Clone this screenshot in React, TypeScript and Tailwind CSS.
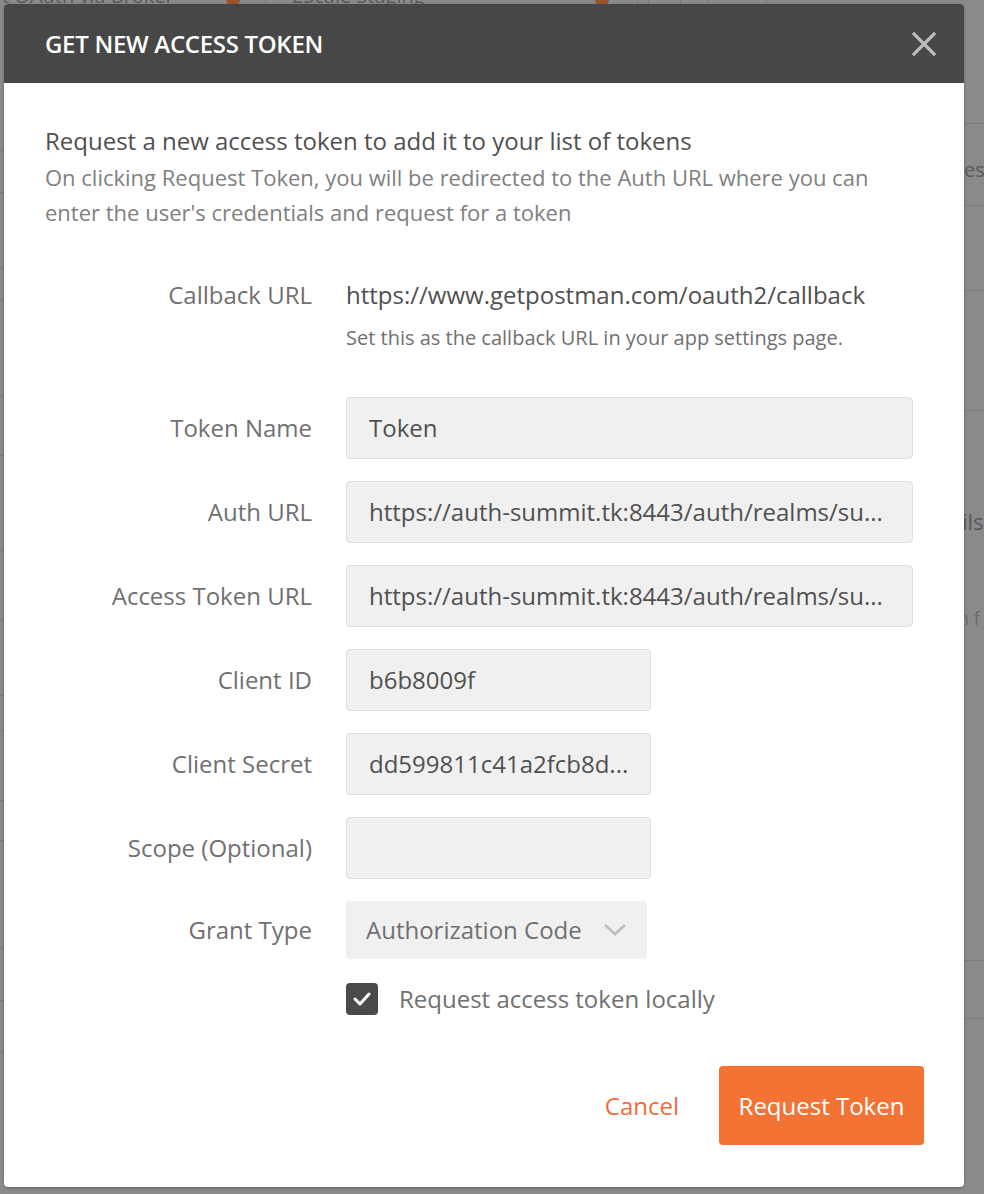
import React from "react";

const font = { fontFamily: '"Open Sans", "Noto Sans", sans-serif' };

function Row({ label, children }: { label: string; children: React.ReactNode }) {
  return (
    <div className="flex items-center">
      <div className="w-[267px] shrink-0 text-right text-[24px] leading-[32px] text-[#707070]">{label}</div>
      <div className="ml-[34px]">{children}</div>
    </div>
  );
}

function Field({ value, w }: { value: string; w: string }) {
  return (
    <div className={`${w} h-[62px] flex items-center rounded-[4px] border border-[#e0e0e0] bg-[#f0f0f0] pl-[22px] pr-[16px] text-[24px] leading-[32px] text-[#505050] overflow-hidden whitespace-nowrap`}>
      <span>{value}</span>
    </div>
  );
}

export default function App() {
  return (
    <div className="relative w-[984px] h-[1194px] overflow-hidden bg-[#8a8a8a]" style={font}>
      {/* faint app content behind overlay */}
      <div className="absolute inset-x-0 top-0 h-[6px] flex items-start text-[20px] leading-none text-[#5a5a5a]">
        <span className="ml-[2px] -mt-[14px]">t OAuth via Broker</span>
        <span className="ml-[52px] -mt-[6px] w-[14px] h-[12px] rounded-full bg-[#a0522d]" />
        <span className="ml-[25px] w-px h-[6px] bg-[#7a7a7a]" />
        <span className="ml-[26px] -mt-[14px]">2Scale Staging</span>
        <span className="ml-[170px] -mt-[6px] w-[14px] h-[12px] rounded-full bg-[#a0522d]" />
        <span className="ml-[28px] w-px h-[6px] bg-[#7a7a7a]" />
        <span className="ml-[10px] w-px h-[6px] bg-[#7a7a7a]" />
        <span className="ml-[31px] w-px h-[6px] bg-[#7a7a7a]" />
        <span className="ml-[27px] w-px h-[6px] bg-[#7a7a7a]" />
        <span className="ml-[57px] w-px h-[6px] bg-[#7a7a7a]" />
      </div>
      <div className="absolute right-0 top-0 w-[20px] h-full">
        <div className="absolute top-[123px] w-full h-px bg-[#7c7c7c]" />
        <div className="absolute top-[155px] left-0 text-[20px] text-[#5a5a5a]">es</div>
        <div className="absolute top-[205px] w-full h-px bg-[#7c7c7c]" />
        <div className="absolute top-[290px] w-full h-px bg-[#7c7c7c]" />
        <div className="absolute top-[410px] w-full h-px bg-[#7c7c7c]" />
        <div className="absolute top-[505px] -left-[2px] text-[22px] text-[#5a5a5a]">ils</div>
        <div className="absolute top-[605px] -left-[6px] text-[18px] text-[#6a6a6a]">n f</div>
        <div className="absolute top-[960px] w-full h-px bg-[#7c7c7c]" />
        <div className="absolute top-[1018px] w-full h-px bg-[#7c7c7c]" />
      </div>
      <div className="absolute left-0 top-0 w-[4px] h-full">
        {[150, 192, 267, 300, 395, 455, 550, 620, 695, 730, 800, 840, 948, 1000, 1052].map((t) => (
          <div key={t} className="absolute w-full h-px bg-[#7c7c7c]" style={{ top: t }} />
        ))}
      </div>

      {/* modal */}
      <div className="absolute left-[4px] top-[4px] w-[960px] h-[1183px] rounded-[4px] bg-white overflow-hidden shadow-[0_1px_3px_rgba(0,0,0,0.3)]">
        <div className="h-[79px] bg-[#474747] flex items-center justify-between pl-[41px] pr-[28px]">
          <div className="text-[24px] font-semibold text-white tracking-[-0.3px]">GET NEW ACCESS TOKEN</div>
          <svg width="24" height="24" viewBox="0 0 24 24">
            <path d="M2 2 L22 22 M22 2 L2 22" stroke="#bdbdbd" strokeWidth="3.2" strokeLinecap="square" />
          </svg>
        </div>

        <div className="pl-[41px] pt-[42px]">
          <div className="text-[24px] leading-[32px] text-[#505050]">Request a new access token to add it to your list of tokens</div>
          <div className="mt-[3px] text-[22px] leading-[35px] text-[#808080] w-[850px]">
            On clicking Request Token, you will be redirected to the Auth URL where you can enter the user's credentials and request for a token
          </div>

          <div className="mt-[49px] flex items-start">
            <div className="w-[267px] shrink-0 text-right text-[24px] leading-[32px] text-[#707070]">Callback URL</div>
            <div className="ml-[34px]">
              <div className="text-[24px] leading-[32px] text-[#505050]">https://www.getpostman.com/oauth2/callback</div>
              <div className="mt-[13px] text-[20px] leading-[28px] text-[#707070]">Set this as the callback URL in your app settings page.</div>
            </div>
          </div>

          <div className="mt-[45px] flex flex-col gap-[22px]">
            <Row label="Token Name"><Field value="Token" w="w-[567px]" /></Row>
            <Row label="Auth URL"><Field value="https://auth-summit.tk:8443/auth/realms/su..." w="w-[567px]" /></Row>
            <Row label="Access Token URL"><Field value="https://auth-summit.tk:8443/auth/realms/su..." w="w-[567px]" /></Row>
            <Row label="Client ID"><Field value="b6b8009f" w="w-[305px]" /></Row>
            <Row label="Client Secret"><Field value="dd599811c41a2fcb8d..." w="w-[305px]" /></Row>
            <Row label="Scope (Optional)"><Field value="" w="w-[305px]" /></Row>
            <Row label="Grant Type">
              <div className="w-[301px] h-[58px] flex items-center justify-between rounded-[4px] bg-[#f0f0f0] pl-[20px] pr-[20px] text-[24px] leading-[32px] text-[#707070] whitespace-nowrap">
                <span>Authorization Code</span>
                <svg width="24" height="14" viewBox="0 0 24 14" className="shrink-0">
                  <path d="M2 2 L12 11 L22 2" fill="none" stroke="#bdbdbd" strokeWidth="2.5" />
                </svg>
              </div>
            </Row>
          </div>

          <div className="mt-[24px] ml-[301px] flex items-center h-[32px]">
            <div className="w-[32px] h-[32px] rounded-[4px] bg-[#4a4a4a] flex items-center justify-center">
              <svg width="20" height="16" viewBox="0 0 20 16">
                <path d="M3 8 L8 13 L17 3" fill="none" stroke="#ffffff" strokeWidth="3" strokeLinecap="round" strokeLinejoin="round" />
              </svg>
            </div>
            <span className="ml-[21px] text-[24px] leading-[32px] text-[#707070]">Request access token locally</span>
          </div>

          <div className="mt-[51px] flex items-center justify-end pr-[40px]">
            <span className="text-[24px] leading-[32px] text-[#f26b3a] mr-[40px]">Cancel</span>
            <div className="w-[205px] h-[79px] rounded-[4px] bg-[#f37335] flex items-center justify-center text-[24px] leading-[32px] text-white">
              Request Token
            </div>
          </div>
        </div>
      </div>
    </div>
  );
}
